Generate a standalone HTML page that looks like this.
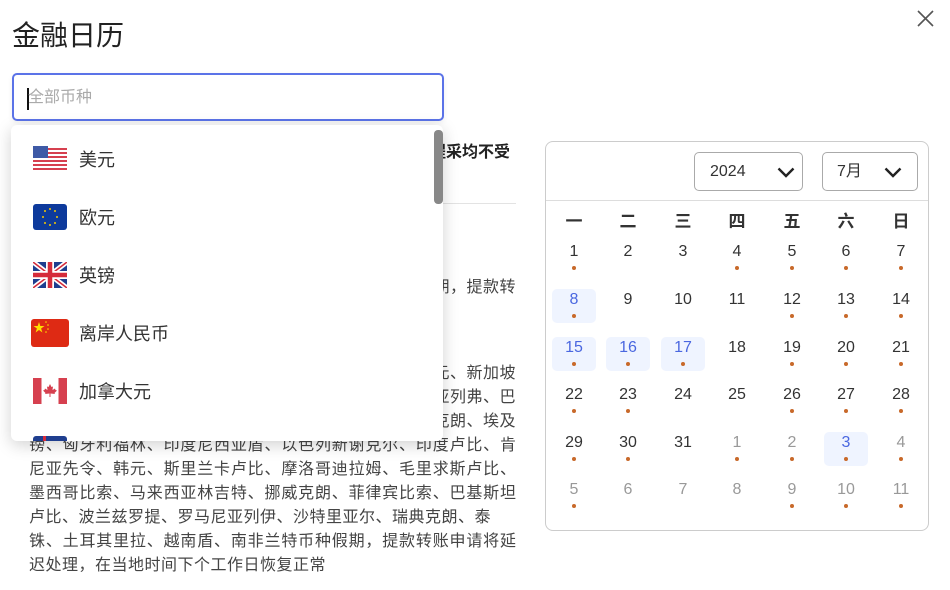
<!DOCTYPE html>
<html><head><meta charset="utf-8"><style>
*{margin:0;padding:0;box-sizing:border-box}
body{width:950px;height:590px;background:#fff;position:relative;overflow:hidden;font-family:"Liberation Sans","Noto Sans CJK SC",sans-serif;color:#333}
.abs{position:absolute}
.ln{position:absolute;left:29px;width:487px;font-size:16px;line-height:24px;white-space:nowrap;color:#444;letter-spacing:.5px}
.j{text-align:justify;text-align-last:justify;letter-spacing:0}
.r{text-align:right}
.cal{left:545px;top:141px;width:384px;height:390px;border:1px solid #ccc;border-radius:8px}
.sel{position:absolute;top:10px;height:39px;border:1px solid #aaa;border-radius:5px;font-size:16px;line-height:37px;color:#333}
.wd{position:absolute;top:68px;width:44px;margin-left:-22px;text-align:center;font-size:17px;line-height:20px;height:20px;font-weight:bold;color:#333;font-family:"Noto Sans CJK SC",sans-serif}
.d{position:absolute;width:44px;height:34px;margin-left:-22px;text-align:center;font-size:16px;line-height:20px;padding-top:1px;color:#333;border-radius:5px}
.d.g{color:#999}
.d.h{background:#eff4ff;color:#4a67e0}
.d i{position:absolute;left:20px;top:25px;width:4px;height:4px;border-radius:50%;background:#c8692a}
.dd{left:11px;top:125px;width:432px;height:316px;background:#fff;border-radius:6px;box-shadow:0 4px 16px rgba(0,0,0,.18);overflow:hidden}
.it{position:absolute;left:0;height:58px;width:420px}
.it svg{position:absolute;left:22px;top:17px}
.it span{position:absolute;left:68px;top:19px;font-size:18px;color:#333;line-height:24px}
</style></head><body>
<div class="abs" style="left:12px;top:18px;font-size:28px;line-height:36px;color:#222">金融日历</div>
<svg class="abs" style="left:917px;top:10px" width="17" height="17" viewBox="0 0 17 17"><path d="M1 1L16 16M16 1L1 16" stroke="#555" stroke-width="1.6"/></svg>

<div class="ln r" style="top:141px;font-weight:bold;color:#222;width:481px;letter-spacing:0">关于节假日期间入金出金，我们的审批流程采均不受</div>
<div class="abs" style="left:29px;top:203px;width:487px;height:1px;background:#e3e3e3"></div>
<div class="ln r" style="top:276px">出金申请受以下节假日影响，可能会延迟到账期，提款转</div>
<div class="ln r" style="top:362px">澳元、新西兰元、瑞士法郎、日元、港元、新加坡</div>
<div class="ln r" style="top:386px">元、捷克克朗、丹麦克朗、保加利亚列弗、巴</div>
<div class="ln r" style="top:410px">西雷亚尔、智利比索、哥伦比亚比索、冰岛克朗、埃及</div>
<div class="ln j" style="top:434px">镑、匈牙利福林、印度尼西亚盾、以色列新谢克尔、印度卢比、肯</div>
<div class="ln j" style="top:458px">尼亚先令、韩元、斯里兰卡卢比、摩洛哥迪拉姆、毛里求斯卢比、</div>
<div class="ln j" style="top:482px">墨西哥比索、马来西亚林吉特、挪威克朗、菲律宾比索、巴基斯坦</div>
<div class="ln" style="top:506px">卢比、波兰兹罗提、罗马尼亚列伊、沙特里亚尔、瑞典克朗、泰</div>
<div class="ln j" style="top:530px">铢、土耳其里拉、越南盾、南非兰特币种假期，提款转账申请将延</div>
<div class="ln" style="top:554px">迟处理，在当地时间下个工作日恢复正常</div>

<div class="abs" style="left:12px;top:73px;width:432px;height:48px;border:2px solid #5b73e8;border-radius:5px;background:#fff;box-shadow:0 2px 6px rgba(0,0,0,.06)">
<div class="abs" style="left:13px;top:13px;width:2px;height:22px;background:#111"></div>
<div class="abs" style="left:14px;top:11px;font-size:16px;line-height:24px;color:#aaa">全部币种</div>
</div>

<div class="abs dd">
<div class="abs" style="left:423px;top:5px;width:9px;height:74px;background:#888;border-radius:4px"></div>
<div class="it" style="top:4px"><svg width="34" height="26" viewBox="0 0 34 26"><rect width="34" height="26" rx="3" fill="#fff"/><g fill="#d6404f"><rect y="2" width="34" height="2"/><rect y="6" width="34" height="2"/><rect y="10" width="34" height="2"/><rect y="14" width="34" height="2"/><rect y="18" width="34" height="2"/><rect y="22" width="34" height="2"/></g><rect x="0" y="0" width="15" height="12" fill="#3e5aa6"/></svg><span>美元</span></div>
<div class="it" style="top:62px"><svg width="34" height="26" viewBox="0 0 34 26"><rect width="34" height="26" rx="3" fill="#0d3a9c"/><g fill="#f5c800"><circle cx="17" cy="5" r="1"/><circle cx="22" cy="7" r="1"/><circle cx="24" cy="13" r="1"/><circle cx="22" cy="19" r="1"/><circle cx="17" cy="21" r="1"/><circle cx="12" cy="19" r="1"/><circle cx="10" cy="13" r="1"/><circle cx="12" cy="7" r="1"/></g></svg><span>欧元</span></div>
<div class="it" style="top:120px"><svg width="34" height="26" viewBox="0 0 34 26"><rect width="34" height="26" rx="3" fill="#1f3e8f"/><path d="M0 0L34 26M34 0L0 26" stroke="#fff" stroke-width="5"/><path d="M0 0L34 26M34 0L0 26" stroke="#d52b3a" stroke-width="1.5"/><path d="M17 0V26M0 13H34" stroke="#fff" stroke-width="8"/><path d="M17 0V26M0 13H34" stroke="#d52b3a" stroke-width="4.5"/></svg><span>英镑</span></div>
<div class="it" style="top:178px"><svg width="38" height="28" viewBox="0 0 38 28" style="left:20px;top:16px"><rect width="38" height="28" rx="3" fill="#de2a14"/><polygon points="8,3 9.3,7 13.5,7 10.1,9.5 11.4,13.5 8,11 4.6,13.5 5.9,9.5 2.5,7 6.7,7" fill="#ffde00"/><g fill="#ffde00"><circle cx="15" cy="3" r=".8"/><circle cx="17" cy="6" r=".8"/><circle cx="17" cy="10" r=".8"/><circle cx="15" cy="13" r=".8"/></g></svg><span>离岸人民币</span></div>
<div class="it" style="top:236px"><svg width="34" height="26" viewBox="0 0 34 26"><rect width="34" height="26" rx="3" fill="#fff"/><rect width="8.5" height="26" fill="#d6404f"/><rect x="25.5" width="8.5" height="26" fill="#d6404f"/><path d="M17 6L18.5 9L20 8.5L19.5 12L22 10.5L22.5 12L24 12.5L21.5 15L22 16L17.5 15.5L17.5 19L16.5 19L16.5 15.5L12 16L12.5 15L10 12.5L11.5 12L12 10.5L14.5 12L14 8.5L15.5 9Z" fill="#d6404f"/></svg><span>加拿大元</span></div>
<div class="it" style="top:294px"><svg width="34" height="26" viewBox="0 0 34 26"><rect width="34" height="26" rx="3" fill="#1f3e8f"/><rect x="10" y="0" width="3" height="26" fill="#d52b3a"/></svg></div>
</div>

<div class="abs cal">
<div class="sel" style="left:148px;width:109px"><span style="position:absolute;left:15px">2024</span><svg style="position:absolute;left:82px;top:14px" width="18" height="11" viewBox="0 0 18 11"><path d="M1.5 1.5L9 9L16.5 1.5" stroke="#222" stroke-width="2.4" fill="none"/></svg></div>
<div class="sel" style="left:276px;width:96px"><span style="position:absolute;left:14px">7月</span><svg style="position:absolute;left:61px;top:14px" width="18" height="11" viewBox="0 0 18 11"><path d="M1.5 1.5L9 9L16.5 1.5" stroke="#222" stroke-width="2.4" fill="none"/></svg></div>
<div class="abs" style="left:0;top:58px;width:382px;height:1px;background:#ddd"></div>
<div class="wd" style="left:28px">一</div><div class="wd" style="left:82px">二</div><div class="wd" style="left:137px">三</div><div class="wd" style="left:191px">四</div><div class="wd" style="left:246px">五</div><div class="wd" style="left:300px">六</div><div class="wd" style="left:355px">日</div>
<div id="g"></div>
</div>
<script>
var cols=[28,82,137,191,246,300,355],rows=[114,162,210,257,305,352];
var days=[[1,1],[2,0],[3,0],[4,1],[5,1],[6,1],[7,1],[8,1,'h'],[9,0],[10,0],[11,0],[12,1],[13,1],[14,1],[15,1,'h'],[16,1,'h'],[17,1,'h'],[18,0],[19,1],[20,1],[21,1],[22,1],[23,1],[24,0],[25,0],[26,1],[27,1],[28,1],[29,1],[30,1],[31,0],[1,1,'g'],[2,1,'g'],[3,1,'h'],[4,1,'g'],[5,1,'g'],[6,0,'g'],[7,0,'g'],[8,0,'g'],[9,1,'g'],[10,1,'g'],[11,1,'g']];
var h='';days.forEach(function(d,i){var c=cols[i%7],r=rows[Math.floor(i/7)];h+='<div class="d '+(d[2]||'')+'" style="left:'+c+'px;top:'+(r-15)+'px">'+d[0]+(d[1]?'<i></i>':'')+'</div>';});
document.getElementById('g').innerHTML=h;
</script>
</body></html>
